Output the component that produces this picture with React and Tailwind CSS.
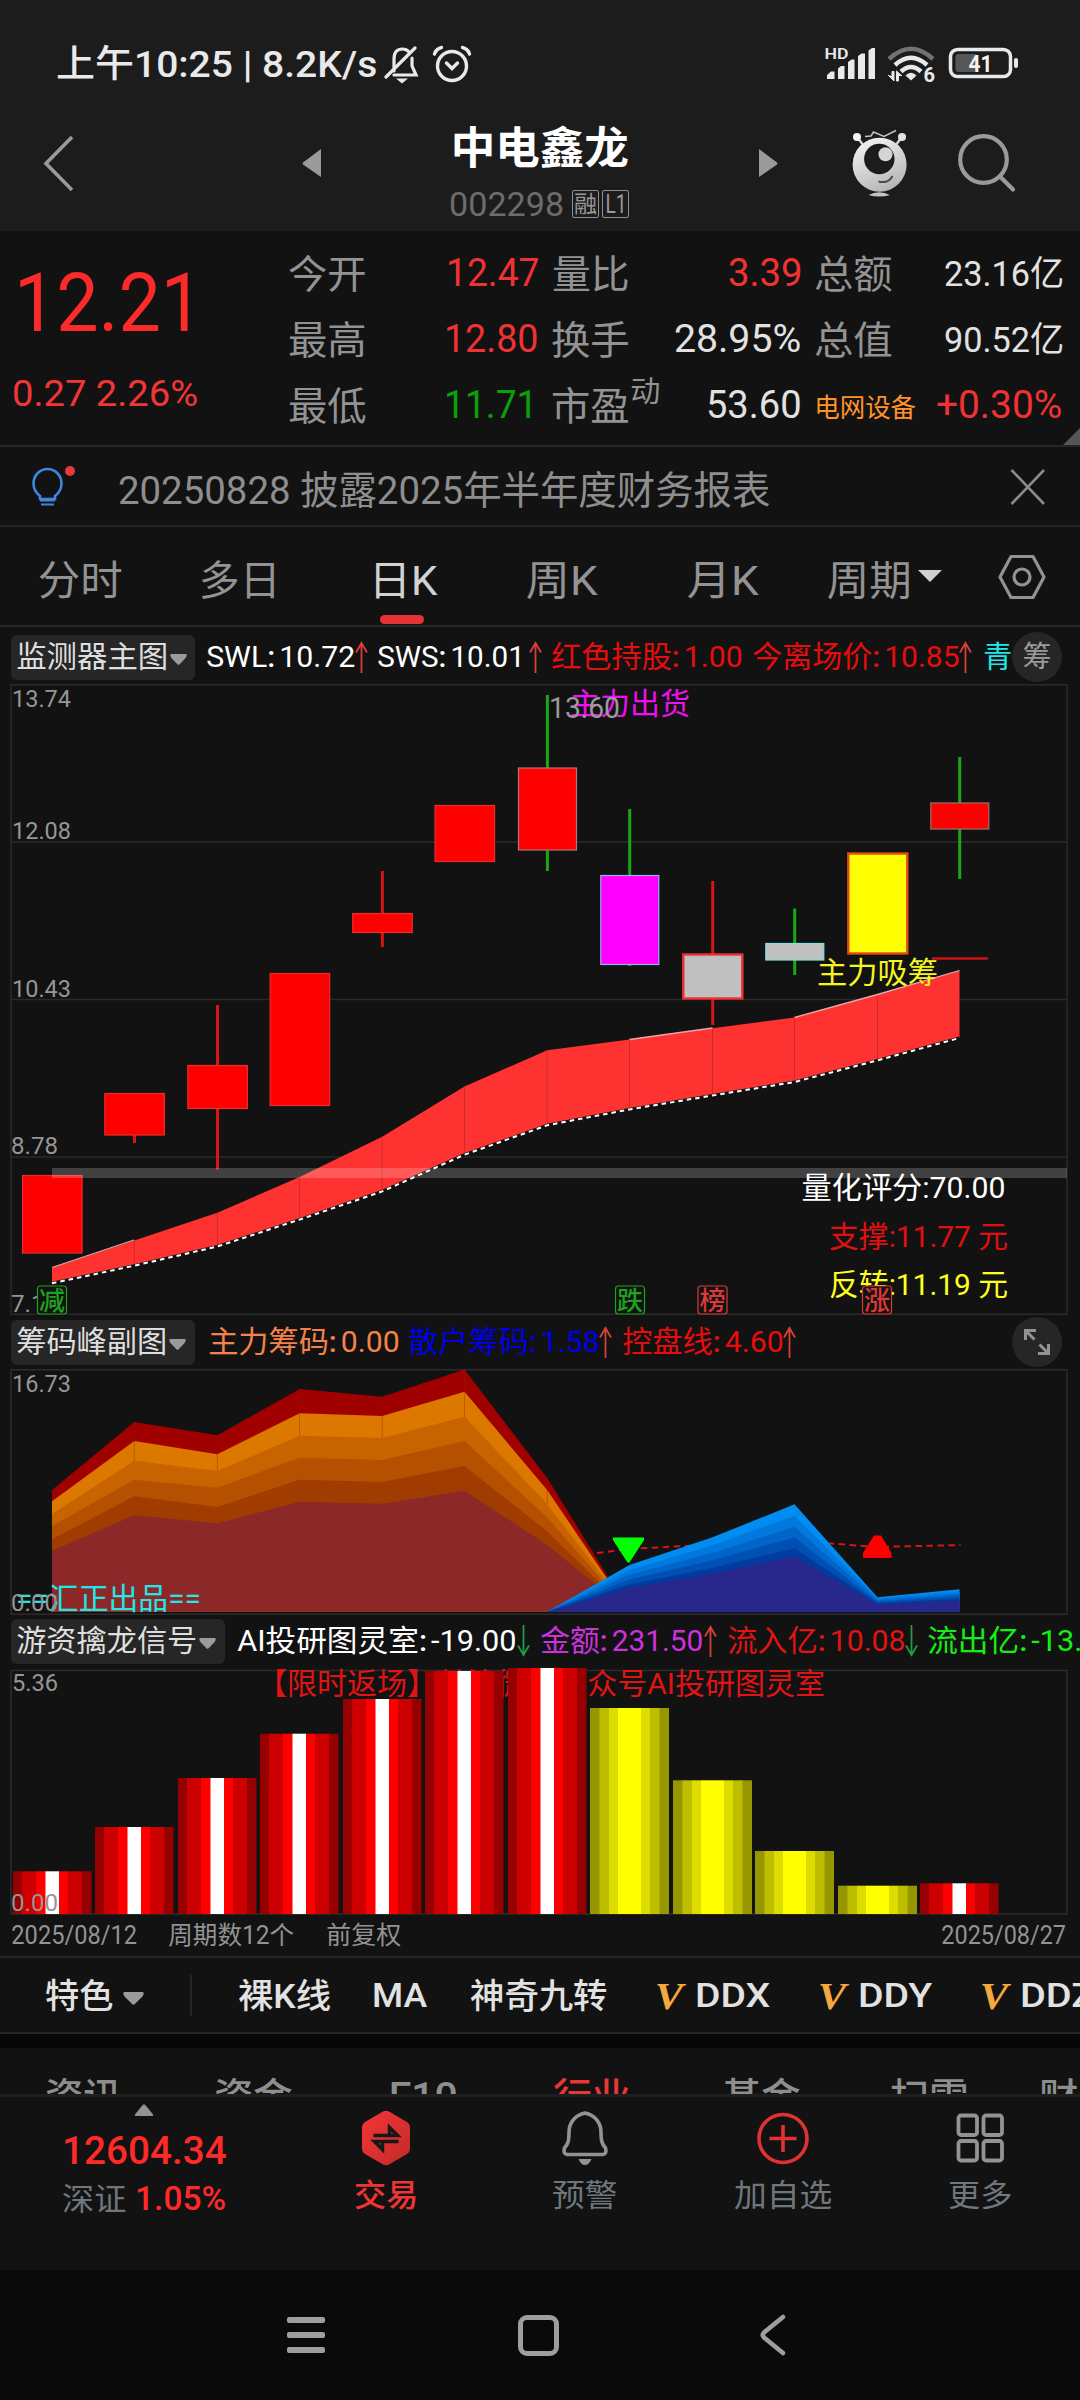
import React, { useLayoutEffect, useRef, useState } from "react";

/* Figures are set a little heavier than the words around them. */
function figures(text) {
  if (typeof text !== "string") return text;
  return text.split(/(: |[-+]?\d[\d.]*%?)/).map((part, i) => {
    if (part === ": ") return <span key={i} className="pr-[4px] font-medium">:</span>;
    return i % 2 ? <span key={i} className="font-[450]">{part}</span> : part;
  });
}

/* A run of text condensed or widened to the measured width of its slot. */
function Fit({ w, dy = 0, num = false, className = "", children }) {
  const ref = useRef(null);
  const [transform, setTransform] = useState("none");
  useLayoutEffect(() => {
    const el = ref.current;
    const size = parseFloat(getComputedStyle(el).fontSize);
    const s = w / (el.offsetWidth - size * 0.07);
    setTransform(`translate(${-size * 0.028 * s}px, ${dy}px) scaleX(${s})`);
  }, [w, dy, children]);
  return (
    <span className={"block flex-none leading-none " + className} style={{ width: w }}>
      <span ref={ref} className="inline-block origin-left whitespace-pre leading-none" style={{ transform }}>
        {num ? figures(children) : children}
      </span>
    </span>
  );
}

function Tri({ className = "", w = 17, h = 11, up = false, color = "#9b9b9b" }) {
  return (
    <svg className={"flex-none " + className} width={w} height={h} viewBox="0 0 17 11" preserveAspectRatio="none">
      <path d={up ? "M1.5 11 Q0 11 .8 9.6 L7.6 .8 Q8.5 -.2 9.4 .8 L16.2 9.6 Q17 11 15.5 11Z" : "M1.5 0 Q0 0 .3 1.6 Q.5 3 1.6 4.2 L7.4 10.2 Q8.5 11.4 9.6 10.2 L15.4 4.2 Q16.5 3 16.7 1.6 Q17 0 15.5 0Z"} fill={color} />
    </svg>
  );
}

function Arrow({ down = false, className = "" }) {
  return (
    <svg className={"flex-none " + className} width="13" height="32" viewBox="0 0 13 32" fill="none" stroke={down ? "#239a48" : "#d84038"} strokeWidth="1.8">
      {down ? <path d="M6.5 0V31M1 20.500L6.500 30L12 20.500" /> : <path d="M6.5 32V1M1 11.500L6.500 2L12 11.500" />}
    </svg>
  );
}

function Chip({ label, w, chipClass }) {
  return (
    <div className={"ml-[11px] flex h-[45px] flex-none items-center rounded-[6px] bg-[#262626] pl-[6px] text-[30px] text-[#dedede] " + chipClass}>
      <Fit w={w}>{label}</Fit>
      <Tri className="ml-[3px] mt-[4px]" />
    </div>
  );
}

function StatusBar() {
  return (
    <div className="flex h-[127px] items-center text-[#e9e9e9]">
      <Fit w={319} dy={1} className="ml-[57px] text-[37px] font-medium">上午10:25 | 8.2K/s</Fit>
      <svg className="ml-[8px] flex-none" width="36" height="40" viewBox="0 0 36 40" fill="none" stroke="#e9e9e9" strokeWidth="3.2" strokeLinecap="round">
        <path d="M10 27V15Q10 5 18.500 5Q22 5 24 7M28 14V22L32 31H10M2 33L31 4" />
        <path d="M12 34.500H24L18 39.500Z" fill="#e9e9e9" stroke="none" />
      </svg>
      <svg className="ml-[12px] flex-none" width="40" height="38" viewBox="0 0 40 38" fill="none" stroke="#e9e9e9" strokeWidth="3.4" strokeLinecap="round">
        <circle cx="20" cy="21" r="14.500" />
        <path d="M2.500 9Q4 4 9.500 2.500M37.500 9Q36 4 30.500 2.500M14.500 18L20 23.500L25.500 18" />
      </svg>
      <svg className="ml-[352px] flex-none" width="194" height="44" viewBox="824 42 194 44">
        <text x="824.500" y="58.500" fontSize="15.500" fontWeight="600" fill="#e9e9e9" textLength="24" lengthAdjust="spacingAndGlyphs">HD</text>
        <g fill="#e9e9e9">
          <path d="M827 79V75L831 71.500H834.500V79ZM838 79V68.500L841 66H844.500V79ZM848 79V62L851.500 59.500H854.500V79ZM858 79V56L861.500 53.500H865V79ZM868.500 79V50.500L872 48H875V79Z" />
        </g>
        <g fill="none" strokeWidth="4.500">
          <path d="M889 59Q911 38.500 933 59" stroke="#727272" />
          <path d="M895 65Q911 50.500 927 65" stroke="#e9e9e9" />
          <path d="M901 71.500Q911 62.500 921 71.500" stroke="#e9e9e9" />
        </g>
        <path d="M905.500 75.500Q911 70 916.500 75.500L911 80.500Z" fill="#e9e9e9" />
        <path d="M888 75L894 81V71.500H892V76M902 76L896.500 71V81H898.500V76" fill="#e9e9e9" stroke="#e9e9e9" strokeWidth="1" />
        <text x="923.500" y="82" fontSize="20" fontWeight="700" fill="#e9e9e9">6</text>
        <rect x="950.500" y="49.500" width="60" height="27" rx="7" fill="none" stroke="#e9e9e9" strokeWidth="3.500" />
        <rect x="955.500" y="54" width="22" height="18" rx="3" fill="#575757" />
        <rect x="1014" y="58" width="4" height="10" rx="2" fill="#e9e9e9" />
        <text x="968.500" y="72" fontSize="23" fontWeight="700" fill="#f2f2f2" textLength="24" lengthAdjust="spacingAndGlyphs">41</text>
      </svg>
    </div>
  );
}

function TitleBar() {
  return (
    <div className="flex h-[104px]">
      <svg className="ml-[42px] mt-[8px] flex-none" width="33" height="58" viewBox="0 0 33 58" fill="none" stroke="#9a9a9a" strokeWidth="3.6">
        <path d="M30 2L4 28.500L30 55" />
      </svg>
      <svg className="ml-[227px] mt-[22px] flex-none" width="19" height="28"><path d="M19 0V28L1 15.500Q0 14.500 1 13.500Z" fill="#9a9a9a" /></svg>
      <div className="ml-[129px] flex w-[180px] flex-none flex-col">
        <Fit w={175} className="ml-[2px] text-[44px] font-bold text-white">中电鑫龙</Fit>
        <div className="mt-[19px] flex h-[28px] items-center">
          <Fit w={113} className="text-[34px] text-[#6c6c6c]">002298</Fit>
          <div className="ml-[9px] flex h-[28px] w-[27px] flex-none items-center justify-center rounded-[2px] border border-[#8f8f8f] text-[23px] leading-none text-[#9a9a9a]">融</div>
          <div className="ml-[3px] flex h-[28px] w-[27px] flex-none items-center justify-center rounded-[2px] border border-[#8f8f8f] text-[#9a9a9a]"><Fit w={20} className="text-[26px]">L1</Fit></div>
        </div>
      </div>
      <svg className="ml-[129px] mt-[22px] flex-none" width="19" height="28"><path d="M0 0V28L18 15.500Q19 14.500 18 13.500Z" fill="#9a9a9a" /></svg>
      <svg className="ml-[72px] mt-[2px] flex-none" width="60" height="70" viewBox="850 129 60 70">
        <defs>
          <linearGradient id="body" x1="0.2" y1="0" x2="0.7" y2="1"><stop offset="0" stopColor="#f4f4f4" /><stop offset="1" stopColor="#b4b4b4" /></linearGradient>
        </defs>
        <path d="M857 137L864 146M902 137L895 146" stroke="#d8d8d8" strokeWidth="2.400" />
        <circle cx="857" cy="137" r="4" fill="#f4f4f4" /><circle cx="902" cy="137" r="4" fill="#e4e4e4" />
        <path d="M865 136.500L871 136L873.500 132L884 136.500L896 130.500" stroke="#c4c4c4" strokeWidth="1.500" fill="none" />
        <circle cx="879.600" cy="164.700" r="27" fill="url(#body)" />
        <circle cx="879.300" cy="159" r="15.200" fill="#1c1c1c" />
        <circle cx="885.500" cy="154.300" r="7" fill="#d4d4d4" />
        <path d="M878.500 181.500Q888.500 184 892.500 176" stroke="#4a4a4a" strokeWidth="2" fill="none" />
        <path d="M868.500 195Q879 189.500 890 195Q879 198 868.500 195Z" fill="#c4c4c4" />
      </svg>
      <svg className="ml-[47px] mt-[6px] flex-none" width="60" height="60" viewBox="957 134 60 60" fill="none" stroke="#9a9a9a" strokeWidth="4.200">
        <circle cx="983.500" cy="160.500" r="23.300" /><path d="M1000.500 178L1013 190.500" strokeLinecap="round" />
      </svg>
    </div>
  );
}

function Quote() {
  return (
    <div className="flex h-[216px] border-b-2 border-[#262626]">
      <div className="w-[289px] flex-none pt-[29px] text-[#fd2a2a]">
        <Fit w={184} dy={2} className="ml-[16px] text-[82px] font-[450]">12.21</Fit>
        <Fit w={184} dy={0} num className="ml-[13px] mt-[33px] text-[37px] text-[#f23636]">0.27 2.26%</Fit>
      </div>
      <div className="flex flex-none flex-col pt-[10px] text-[39px] text-[#939393]">
        <div className="flex h-[66px] items-center">
          <Fit w={76} dy={1}>今开</Fit>
          <Fit w={91} dy={-1} num className="ml-[82px] text-[#f03232]">12.47</Fit>
          <Fit w={75} dy={1} className="ml-[15px]">量比</Fit>
          <Fit w={72} dy={-1} num className="ml-[101px] text-[#f03232]">3.39</Fit>
          <Fit w={76} dy={1} className="ml-[14px]">总额</Fit>
          <Fit w={118} dy={0} num className="ml-[54px] text-[35px] text-[#e2e2e2]">23.16亿</Fit>
        </div>
        <div className="flex h-[66px] items-center">
          <Fit w={76} dy={1}>最高</Fit>
          <Fit w={92} dy={-1} num className="ml-[80px] text-[#f03232]">12.80</Fit>
          <Fit w={76} dy={1} className="ml-[15px]">换手</Fit>
          <Fit w={125} dy={-1} num className="ml-[47px] text-[#e2e2e2]">28.95%</Fit>
          <Fit w={76} dy={1} className="ml-[15px]">总值</Fit>
          <Fit w={118} dy={0} num className="ml-[54px] text-[35px] text-[#e2e2e2]">90.52亿</Fit>
        </div>
        <div className="flex h-[66px] items-center">
          <Fit w={76} dy={1}>最低</Fit>
          <Fit w={91} dy={-1} num className="ml-[80px] text-[#0aa00a]">11.71</Fit>
          <Fit w={76} dy={1} className="ml-[16px]">市盈</Fit>
          <Fit w={28} dy={-14} className="ml-[3px] text-[29px]">动</Fit>
          <Fit w={93} dy={-1} num className="ml-[48px] text-[#e2e2e2]">53.60</Fit>
          <Fit w={100} dy={2} className="ml-[15px] text-[26px] text-[#ff9328]">电网设备</Fit>
          <Fit w={124} dy={-1} num className="ml-[22px] text-[#f03232]">+0.30%</Fit>
        </div>
      </div>
      <svg className="ml-auto mt-auto flex-none self-end" width="17" height="17"><path d="M17 0V17H0Z" fill="#555" /></svg>
    </div>
  );
}

function Notice() {
  return (
    <div className="flex h-[80px] items-center border-b-2 border-[#232323]">
      <svg className="ml-[31px] flex-none" width="48" height="44" viewBox="31 464 48 44" fill="none">
        <path d="M40 499V496Q33.500 491 33.500 483.500A14 14.500 0 0 1 61.500 483.500Q61.500 491 55 496V499Z" stroke="#3f86e0" strokeWidth="2.600" />
        <path d="M40 500.500H55M41 504.500H54" stroke="#3f86e0" strokeWidth="2" />
        <circle cx="70" cy="471" r="5" fill="#e83a3a" />
      </svg>
      <Fit w={650} dy={5} className="ml-[40px] text-[39px] text-[#8e8e8e]">20250828 披露2025年半年度财务报表</Fit>
      <svg className="ml-[240px] flex-none" width="38" height="38" viewBox="0 0 38 38" stroke="#8b8b8b" strokeWidth="2.600"><path d="M2.500 3L35 37M35 3L2.500 37" /></svg>
    </div>
  );
}

function PeriodTabs() {
  return (
    <div className="flex h-[100px] items-center border-b-2 border-[#262626] text-[41px] text-[#939393]">
      <Fit w={82} dy={4.500} className="ml-[39px]">分时</Fit>
      <Fit w={79} dy={4.500} className="ml-[79px]">多日</Fit>
      <div className="ml-[91px] flex w-[66px] flex-none flex-col items-center pt-[30px] text-[#d2d2d2]">
        <Fit w={66} dy={2}>日K</Fit>
        <div className="ml-[-3px] mt-[15px] h-[9px] w-[44px] rounded-full bg-[#e63232]" />
      </div>
      <Fit w={69} dy={4.500} className="ml-[91px]">周K</Fit>
      <Fit w={69} dy={4.500} className="ml-[92px]">月K</Fit>
      <Fit w={82} dy={4.500} className="ml-[71px]">周期</Fit>
      <svg className="ml-[8px] flex-none" width="24" height="12"><path d="M0 0H24L12 12Z" fill="#d0d0d0" /></svg>
      <svg className="ml-[56px] flex-none" width="48" height="46" viewBox="0 0 48 46" fill="none" stroke="#939393" strokeWidth="3.200">
        <path d="M13 3.500H35L46 24L35 44.500H13L2 24Z" strokeLinejoin="round" /><circle cx="24" cy="24" r="8" />
      </svg>
    </div>
  );
}

const X = [52, 134.3, 217.3, 299.6, 382.2, 464.5, 547.2, 629.5, 712.5, 794.5, 877.5, 959.5];
const bandTop = [1267.8, 1240.4, 1212.7, 1177, 1136.7, 1086.5, 1050.2, 1039.6, 1028.2, 1017.6, 994.7, 970.6];
const bandLow = [1283.3, 1265.7, 1246.5, 1219.6, 1191.4, 1154.7, 1125.3, 1109.4, 1095.5, 1082, 1060.4, 1038];
const R = "#ff0000", G = "#18a818", C = "#d81414";
/* [top, bottom, fill, outline, half width, wick top, wick bottom, wick colour] */
const candles = [
  [1175.500, 1253, R, "#ee2c2c", 29.750, 0, 0, C],
  [1093.500, 1135, R, "#ee2c2c", 29.750, 1093, 1143, C],
  [1065.500, 1108.5, R, "#ee2c2c", 29.750, 1005, 1169.500, C],
  [973.500, 1105.500, R, "#ee2c2c", 29.750, 0, 0, C],
  [913.500, 932.5, R, "#ee2c2c", 29.750, 871, 947, C],
  [805.500, 861.500, R, "#ee2c2c", 29.750, 0, 0, C],
  [768, 850, R, "#b07878", 29, 695, 871, G],
  [875.500, 964.5, "#ff00ff", "#8fb4f0", 29, 809, 966, G],
  [954.500, 998.5, "#c0c0c0", "#ee3232", 29.500, 881, 1025, C],
  [943.500, 960, "#c0c0c0", "#7fe0e0", 29, 908.5, 975, G],
  [853.500, 953.5, "#ffff00", "#e04a14", 29.500, 0, 0, C],
  [803, 829, R, "#9a7070", 29, 757, 879, G],
];
const join = (ys) => ys.map((y, i) => `${X[i]},${y}`).join(" ");
const area = (xs, ys, base) => `${xs[0]},${base} ` + xs.map((x, i) => `${x},${ys[i]}`).join(" ") + ` ${xs[xs.length - 1]},${base}`;

function T({ x, y, w, size = 30, weight = 400, fill, children }) {
  return <text x={x} y={y} fontSize={size} fontWeight={weight} fill={fill} textLength={w} lengthAdjust="spacingAndGlyphs">{children}</text>;
}

function Badge({ x, color, children }) {
  return (
    <g>
      <rect x={x} y="1286" width="29" height="28" rx="3" fill="#121212" stroke={color} strokeWidth="1.200" />
      <text x={x + 1.5} y="1309.5" fontSize="26" fontWeight="500" fill={color}>{children}</text>
    </g>
  );
}

function MainChart() {
  return (
    <svg className="block flex-none" width="1080" height="631" viewBox="0 684 1080 631">
      <g stroke="#2a2a2a" strokeWidth="1.500" fill="none">
        <rect x="11" y="684.750" width="1056" height="629.500" />
        <path d="M11 842H1067M11 999.500H1067M11 1157H1067" />
      </g>
      {candles.map(([t, b, f, s, h, w1, w2, wc], i) => (
        <g key={i}>
          {w2 > 0 && <path d={`M${X[i] + 0.2} ${w1}V${w2}`} stroke={wc} strokeWidth="3" />}
          <rect x={X[i] + 0.3 - h} y={t} width={h * 2} height={b - t} fill={f} stroke={s} strokeWidth={f === "#ffff00" || h === 29.5 ? 2.4 : 1.2} />
        </g>
      ))}
      <polygon points={join(bandTop) + " " + X.map((x, i) => `${x},${bandLow[i]}`).reverse().join(" ")} fill="#ff3232" />
      {X.slice(1, 11).map((x, i) => <path key={x} d={`M${x} ${bandTop[i + 1]}V${bandLow[i + 1]}`} stroke="#cf2a2a" strokeWidth="1" />)}
      <path d="M52 1267.500L134 1240M629.500 1039.500L712.500 1028M794.500 1017.500L877.500 994.500L959.500 970.500" stroke="#e8a8a8" strokeWidth="1.300" fill="none" />
      <polyline points={join(bandLow)} fill="none" stroke="#121212" strokeWidth="3" />
      <polyline points={join(bandLow)} fill="none" stroke="#fff" strokeWidth="2" strokeDasharray="4.500 4" />
      <rect x="52" y="1168" width="1015" height="10" fill="#fff" fillOpacity="0.200" />
      <path d="M932 958.500H988" stroke="#cc1414" strokeWidth="2.400" />
      <T x={570} y={713.500} w={120} fill="#f00ff0">主力出货</T>
      <T x={549} y={718} w={71} size={30} fill="#9a9a9a">13.60</T>
      <T x={817} y={983} w={121} fill="#f5f520">主力吸筹</T>
      <T x={801.500} y={1197.500} w={204} fill="#fff">量化评分:<tspan fontWeight="450">70.00</tspan></T>
      <T x={829} y={1247} w={179} fill="#e01010">支撑:<tspan fontWeight="450">11.77</tspan> 元</T>
      <T x={829} y={1294.500} w={179} fill="#ffff1e">反转:<tspan fontWeight="450">11.19</tspan> 元</T>
      <g>
        <T x={12} y={706.500} w={59} size={24} fill="#969696">13.74</T>
        <T x={12} y={838.500} w={59} size={24} fill="#969696">12.08</T>
        <T x={12} y={996.500} w={59} size={24} fill="#969696">10.43</T>
        <T x={11} y={1153.500} w={47} size={24} fill="#969696">8.78</T>
        <T x={11} y={1312} w={47} size={24} fill="#969696">7.12</T>
      </g>
      <Badge x={37.500} color="#1fa01f">减</Badge>
      <Badge x={615.500} color="#1fa01f">跌</Badge>
      <Badge x={698} color="#dc3838">榜</Badge>
      <Badge x={862.500} color="#dc3838">涨</Badge>
    </svg>
  );
}

const warm = [
  ["#a00000", [1490, 1422, 1435.3, 1389, 1396.7, 1369.5, 1478]],
  ["#dc7800", [1501.3, 1441, 1454.3, 1413.3, 1416, 1391.7, 1490]],
  ["#c86400", [1514, 1460.7, 1471, 1435.7, 1438, 1416.7, 1504]],
  ["#b45000", [1526, 1479.7, 1487.7, 1457.7, 1460, 1441, 1517.4]],
  ["#a03c00", [1539.3, 1496.3, 1507, 1479.7, 1482, 1466, 1531.4]],
  ["#8c2828", [1550.7, 1515.3, 1523.3, 1501.7, 1503.7, 1490.7, 1545]],
];
const cool = [["#008cf0", 1], ["#0078dc", 0.894], ["#0064c8", 0.79], ["#0050b4", 0.69], ["#003ca0", 0.59], ["#28288c", 0.515]];
const coolTop = [0, 46.7, 74.4, 107.4, 14.4, 22.4];

function ChipChart() {
  return (
    <svg className="block flex-none" width="1080" height="246" viewBox="0 1369 1080 246">
      <rect x="11" y="1369.750" width="1056" height="244.500" stroke="#2c2c2c" strokeWidth="1.500" fill="none" />
      <T x={12} y={1392} w={59} size={24} fill="#969696">16.73</T>
      <path d="M547 1560L594 1553.500L629 1549L712 1544.500L794 1543L831 1543.500L877 1547L960.500 1545" stroke="#d81414" strokeWidth="2" strokeDasharray="6.500 4.500" strokeDashoffset="4.500" fill="none" />
      {warm.map(([c, ys]) => <polygon key={c} points={area(X.slice(0, 8), [...ys, 1611.700], 1611.7)} fill={c} />)}
      {X.slice(1, 7).map((x, i) => <path key={x} d={`M${x} ${warm[0][1][i + 1]}V${warm[2][1][i + 1]}`} stroke="#7a2800" strokeOpacity="0.350" strokeWidth="1" />)}
      {cool.map(([c, k]) => <polygon key={c} points={area(X.slice(6), coolTop.map((v) => 1611.7 - v * k), 1611.7)} fill={c} />)}
      <path d="M613 1537.500H644V1540L629.500 1562.500H627.500L613 1540Z" fill="#00ff00" />
      <path d="M874 1535.500H881L891.500 1553V1558H863V1553Z" fill="#ff0000" />
      <T x={16} y={1608.500} w={185} fill="#20e8e8">==汇正出品==</T>
      <T x={11} y={1611} w={47} size={24} fill="#969696">0.00</T>
    </svg>
  );
}

const barTops = [1871.3, 1827, 1778, 1733.7, 1699, 1671, 1668, 1708, 1780.3, 1851, 1885.7, 1883.3];
const redStripes = [["#960000", 0, 9], ["#cc0000", 9, 14], ["#ff0000", 23, 10], ["#ffffff", 32.5, 13.5], ["#ff0000", 46, 9], ["#cc0000", 55, 14], ["#960000", 69, 9.5]];
const yellowStripes = [["#969600", 0, 10], ["#bebe00", 9.5, 10], ["#dcdc00", 19, 9], ["#ffff00", 28, 23], ["#dcdc00", 51, 9], ["#bebe00", 60, 10], ["#969600", 69.5, 9.5]];

function SignalChart() {
  return (
    <svg className="block flex-none overflow-visible" width="1080" height="246" viewBox="0 1669 1080 246">
      <rect x="11" y="1670.500" width="1056" height="243.500" stroke="#2c2c2c" strokeWidth="1.500" fill="none" />
      <T x={257} y={1694} w={568} fill="#e01414">【限时返场】关注微信公众号AI投研图灵室</T>
      {barTops.map((t, i) =>
        (i > 6 && i < 11 ? yellowStripes : redStripes).map(([c, dx, w], j) => (
          <rect key={i + "-" + j} x={Math.round(12.900 + i * 82.500) + dx} y={t} width={w} height={1914 - t} fill={c} />
        ))
      )}
      <T x={12} y={1691} w={46} size={24} fill="#969696">5.36</T>
      <T x={11} y={1910.500} w={47} size={24} fill="#969696">0.00</T>
    </svg>
  );
}

function Feature() {
  return (
    <div className="flex h-[78px] items-center border-b-2 border-t-2 border-[#262626] text-[34px] font-medium text-[#e2e2e2]">
      <Fit w={66} dy={1} className="ml-[46px]">特色</Fit>
      <Tri className="ml-[11px] mt-[6px]" w={21} h={13} />
      <div className="ml-[46px] h-[41px] w-[2px] flex-none bg-[#262626]" />
      <Fit w={90} dy={1} className="ml-[47px]">裸K线</Fit>
      <Fit w={53} dy={0} className="ml-[44px]">MA</Fit>
      <Fit w={135} dy={1} className="ml-[45px]">神奇九转</Fit>
      {[["DDX", 50, 73], ["DDY", 50, 71], ["DDZ", 51, 73]].map(([t, m, w]) => (
        <React.Fragment key={t}>
          <span className="block flex-none" style={{ width: m }} />
          <span className="block w-[27px] flex-none font-['Liberation_Serif',serif] text-[38px] font-bold italic leading-none text-[#f5a83c]"><Fit w={25} dy={1}>V</Fit></span>
          <Fit w={w} dy={0} className="ml-[13px]">{t}</Fit>
        </React.Fragment>
      ))}
    </div>
  );
}

function InfoTabs() {
  return (
    <div className="flex h-[49px] flex-none items-start overflow-hidden border-b-[3px] border-[#1f1f1f] pt-[30px] text-[38px] font-medium text-[#8e8e8e]">
      <Fit w={74} className="ml-[46px]">资讯</Fit>
      <Fit w={76} className="ml-[95px]">资金</Fit>
      <Fit w={66} className="ml-[99px]">F10</Fit>
      <Fit w={75} className="ml-[98px] text-[#e83636]">行业</Fit>
      <Fit w={76} className="ml-[94px]">基金</Fit>
      <Fit w={76} className="ml-[92px]">扫雷</Fit>
      <Fit w={76} className="ml-[73px]">财务</Fit>
    </div>
  );
}

function BottomBar() {
  return (
    <div className="flex h-[173px] text-[31px] text-[#6f777d]">
      <div className="flex w-[288px] flex-none flex-col items-center pt-[7px] text-[#fd2a2a]">
        <Tri up w={20} h={12} color="#939393" />
        <Fit w={162} dy={1} className="mt-[15px] text-[39px] font-medium">12604.34</Fit>
        <div className="mt-[11px] flex items-center">
          <Fit w={62} dy={2} className="text-[31px] text-[#6f777d]">深证</Fit>
          <Fit w={89} dy={1} className="ml-[11px] text-[33px] font-medium">1.05%</Fit>
        </div>
      </div>
      <div className="ml-[1px] flex w-[194px] flex-none flex-col items-center pt-[13px] font-medium text-[#f03434]">
        <svg width="50" height="56" viewBox="0 0 50 56">
          <defs><linearGradient id="hex" x1="0" y1="0" x2="1" y2="1"><stop offset="0" stopColor="#f43636" /><stop offset="1" stopColor="#c22a2a" /></linearGradient></defs>
          <path d="M22 1.500Q25 0 28 1.500L46 12Q49 14 49 17V39Q49 42 46 44L28 54.500Q25 56 22 54.500L4 44Q1 42 1 39V17Q1 14 4 12Z" fill="url(#hex)" />
          <path d="M12.500 25.500H36.500L28.500 17.500V24M37.500 31.500H13.500L21.500 39.500V33" fill="none" stroke="#181818" strokeWidth="3.500" />
        </svg>
        <Fit w={62} dy={1} className="mt-[13px]">交易</Fit>
      </div>
      <div className="flex w-[203px] flex-none flex-col items-center pt-[13px]">
        <svg width="46" height="56" viewBox="0 0 46 56" fill="none" stroke="#939393" strokeWidth="3.600">
          <path d="M23 3C13 5 7 13 7 22C7 31 6 34 2.500 38Q1 44 5 44.500H41Q45 44 43.500 38C40 34 39 31 39 22C39 13 33 5 23 3Z" strokeLinejoin="round" />
          <path d="M16.500 49H29.500Q27 55 23 55Q19 55 16.500 49Z" fill="#939393" stroke="none" />
        </svg>
        <Fit w={63} dy={1} className="mt-[13px]">预警</Fit>
      </div>
      <div className="flex w-[193px] flex-none flex-col items-center pt-[13px]">
        <svg width="54" height="56" viewBox="0 0 54 56" fill="none" stroke="#e03232" strokeWidth="3.600"><circle cx="27" cy="28.500" r="24" /><path d="M27 15V42M13.500 28.500H40.500" /></svg>
        <Fit w={96} dy={1} className="mt-[13px]">加自选</Fit>
      </div>
      <div className="flex w-[201px] flex-none flex-col items-center pt-[13px]">
        <svg width="50" height="56" viewBox="0 0 50 56" fill="none" stroke="#939393" strokeWidth="3.800">
          <rect x="3.500" y="5.500" width="18.500" height="19.500" rx="2.500" /><rect x="28.500" y="5.500" width="18.500" height="19.500" rx="2.500" />
          <rect x="3.500" y="31" width="18.500" height="19.500" rx="2.500" /><rect x="28.500" y="31" width="18.500" height="19.500" rx="2.500" />
        </svg>
        <Fit w={62} dy={1} className="mt-[13px]">更多</Fit>
      </div>
    </div>
  );
}

export default function App() {
  return (
    <div className="flex h-[2400px] w-[1080px] flex-col overflow-hidden bg-[#121212] font-['Roboto','Noto_Sans_CJK_SC',sans-serif]">
      <header className="h-[231px] flex-none bg-[#1c1c1c]">
        <StatusBar />
        <TitleBar />
      </header>
      <Quote />
      <Notice />
      <PeriodTabs />
      <div className="flex h-[57px] flex-none items-center pt-[3px] text-[30px]">
        <Chip label="监测器主图" w={150} chipClass="w-[184px]" />
        <Fit w={147} num className="ml-[12px] text-white">SWL: 10.72</Fit>
        <Arrow className="ml-[1px]" />
        <Fit w={146} num className="ml-[10px] text-white">SWS: 10.01</Fit>
        <Arrow className="ml-[5px]" />
        <Fit w={189} num className="ml-[10px] text-[#e80c0c]">红色持股: 1.00</Fit>
        <Fit w={205} num className="ml-[12px] text-[#e80c0c]">今离场价: 10.85</Fit>
        <Arrow className="ml-[1px]" />
        <Fit w={27} className="ml-[12px] text-[#20e8e8]">青</Fit>
        <div className="ml-[1px] flex size-[50px] flex-none items-center justify-center rounded-full bg-[#262626] text-[29px] leading-none text-[#9a9a9a]">筹</div>
      </div>
      <MainChart />
      <div className="flex h-[54px] flex-none items-center text-[30px]">
        <Chip label="筹码峰副图" w={149} chipClass="w-[184px]" />
        <Fit w={189} num className="ml-[14px] text-[#f5824a]">主力筹码: 0.00</Fit>
        <Fit w={189} num className="ml-[11px] text-[#0000e6]">散户筹码: 1.58</Fit>
        <Arrow className="ml-[1px]" />
        <Fit w={159} num className="ml-[11px] text-[#e80c0c]">控盘线: 4.60</Fit>
        <Arrow className="ml-[1px]" />
        <div className="ml-[216px] flex size-[50px] flex-none items-center justify-center rounded-full bg-[#262626]">
          <svg width="26" height="26" viewBox="0 0 26 26" fill="none" stroke="#939393" strokeWidth="3"><path d="M1.500 11V1.500H12M2 2L10.500 10.500M24.500 15V24.500H14M24 24L15.500 15.500" /></svg>
        </div>
      </div>
      <ChipChart />
      <div className="flex h-[54px] flex-none items-center pb-[2px] text-[30px]">
        <Chip label="游资擒龙信号" w={179} chipClass="w-[214px]" />
        <Fit w={277} num className="ml-[13px] text-white">AI投研图灵室: -19.00</Fit>
        <Arrow down className="ml-[2px]" />
        <Fit w={161} num className="ml-[11px] text-[#cc32dc]">金额: 231.50</Fit>
        <Arrow className="ml-[2px]" />
        <Fit w={176} num className="ml-[11px] text-[#e01414]">流入亿: 10.08</Fit>
        <Arrow down className="ml-[1px]" />
        <Fit w={188} num className="ml-[10px] text-[#14f014]">流出亿: -13.27</Fit>
      </div>
      <SignalChart />
      <div className="flex h-[41px] flex-none items-center text-[25px] text-[#939393]">
        <Fit w={124} className="ml-[12px]">2025/08/12</Fit>
        <Fit w={124} className="ml-[33px]">周期数12个</Fit>
        <Fit w={73} className="ml-[34px]">前复权</Fit>
        <Fit w={123} className="ml-[542px]">2025/08/27</Fit>
      </div>
      <Feature />
      <div className="h-[14px] flex-none bg-[#070707]" />
      <InfoTabs />
      <BottomBar />
      <nav className="flex h-[130px] flex-none items-center bg-[#0a0a0a]">
        <div className="ml-[287px] flex w-[38px] flex-none flex-col gap-[9px]">
          <div className="h-[6px] rounded-[2px] bg-[#9e9e9e]" />
          <div className="h-[6px] rounded-[2px] bg-[#9e9e9e]" />
          <div className="h-[6px] rounded-[2px] bg-[#9e9e9e]" />
        </div>
        <div className="ml-[193px] h-[41px] w-[41px] flex-none rounded-[9px] border-[5px] border-[#9e9e9e]" />
        <svg className="ml-[200px] flex-none" width="28" height="42" viewBox="0 0 28 42" fill="none" stroke="#9e9e9e" strokeWidth="4.500" strokeLinecap="round"><path d="M24 3L5 18.500Q2.500 21 5 23.500L24 39" /></svg>
      </nav>
    </div>
  );
}
